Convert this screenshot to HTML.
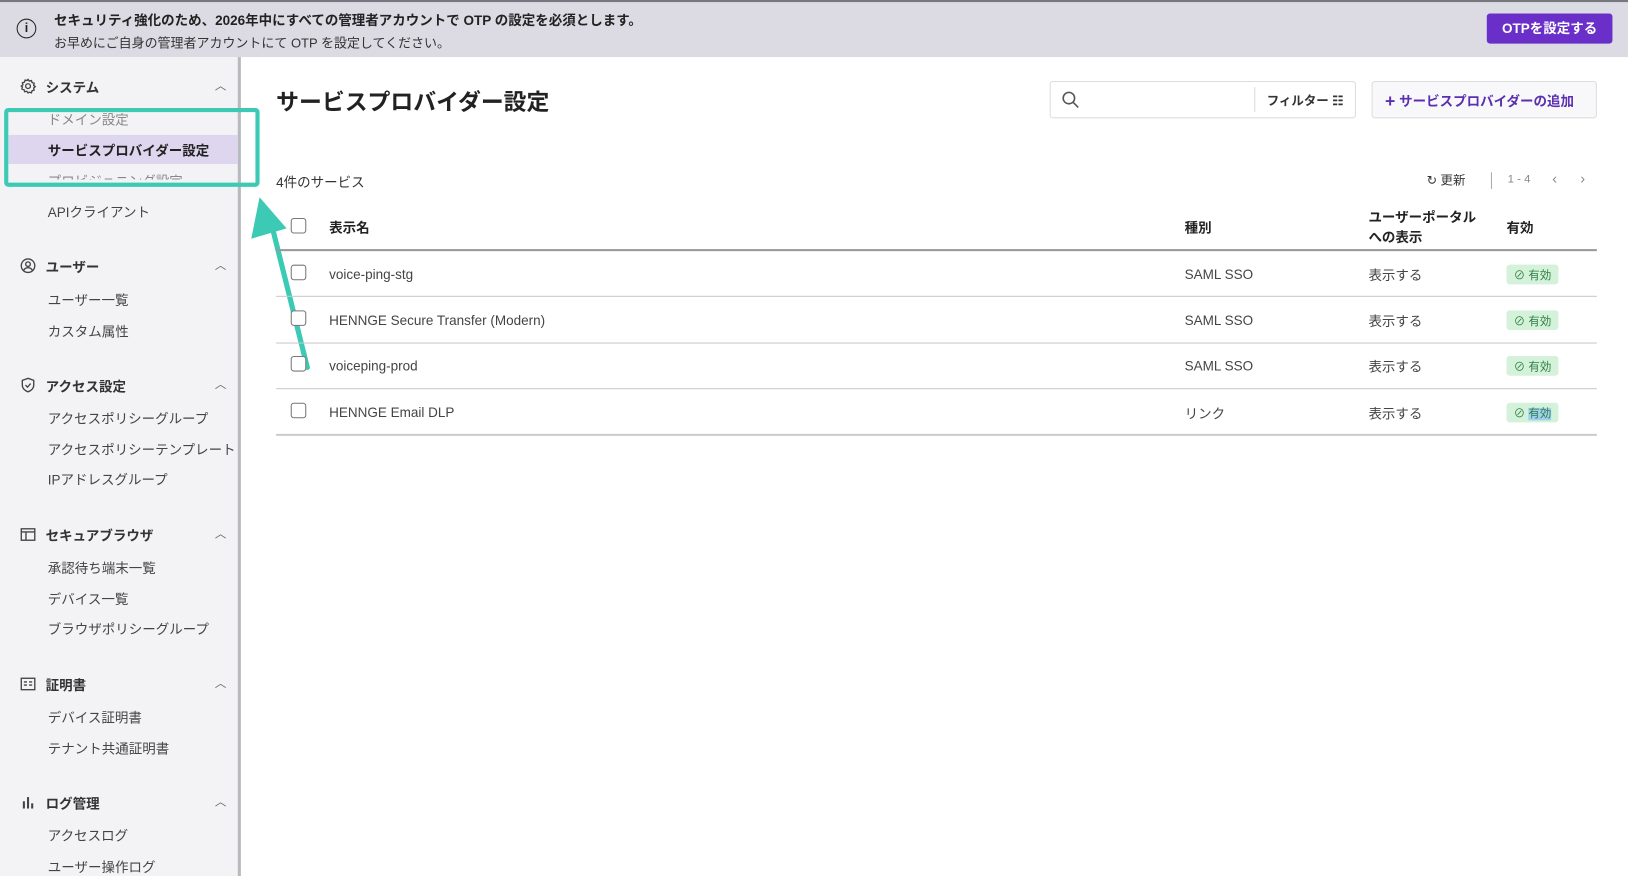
<!DOCTYPE html>
<html><head><meta charset="utf-8"><style>
*{box-sizing:border-box;margin:0;padding:0}
html,body{width:1628px;height:876px;overflow:hidden;background:#fff}
#w{width:1568px;height:844px;transform:scale(1.03827,1.0379);transform-origin:0 0;position:relative;font-family:"Liberation Sans","Noto Sans CJK JP",sans-serif;color:#222}
.a{position:absolute;white-space:nowrap}
.banner{left:0;top:0;width:1568px;height:55px;background:#dcdbe3;border-top:2px solid #77777f}
.side{left:0;top:55px;width:232px;height:789px;background:#f3f3f6;border-right:3px solid #b9b9c0}
.sh{font-size:13px;font-weight:bold;color:#333}
.si{font-size:13px;color:#444;left:46px}
.car{left:207px;font-size:11px;color:#666}
.th{font-size:13px;font-weight:bold;color:#222}
.td{font-size:13px;color:#444}
.cb{width:15px;height:15px;border:1.5px solid #777;border-radius:3px;left:280px;background:#fff}
.line{left:266px;width:1272px;height:1px;background:#c8c8c8}
.badge{left:1451px;width:50px;height:19px;background:#d4f2da;border-radius:3px;font-size:11px;color:#2e7d43;padding:2px 0 0 7px}
</style></head><body><div id="w">
<div class="a banner"></div>
<div class="a" style="left:16px;top:18px;width:19px;height:19px;border:1.6px solid #222;border-radius:50%;font-size:12px;font-weight:bold;text-align:center;line-height:16px">i</div>
<div class="a" style="left:52px;top:9px;font-size:13px;font-weight:bold">セキュリティ強化のため、2026年中にすべての管理者アカウントで OTP の設定を必須とします。</div>
<div class="a" style="left:52px;top:31px;font-size:12.5px;color:#333">お早めにご自身の管理者アカウントにて OTP を設定してください。</div>
<div class="a" style="left:1432px;top:13px;width:121px;height:29px;background:#6a2fc8;border-radius:3px;color:#fff;font-size:13px;font-weight:bold;text-align:center;line-height:29px">OTPを設定する</div>

<div class="a side"></div>
<div class="a" style="left:8px;top:130px;width:221px;height:28px;background:#ddd6ee"></div>
<svg class="a" style="left:19px;top:75px" width="16" height="16" viewBox="0 0 16 16" fill="none" stroke="#444" stroke-width="1.3"><circle cx="8" cy="8" r="2.3"/><path d="M8 1.5l1.3 1.6 2-.5.6 2 2 .6-.5 2 1.6 1.3-1.6 1.3.5 2-2 .6-.6 2-2-.5L8 14.5l-1.3-1.6-2 .5-.6-2-2-.6.5-2L1.5 8l1.6-1.3-.5-2 2-.6.6-2 2 .5z"/></svg>
<div class="a sh" style="left:44px;top:74px">システム</div><div class="a car" style="top:74px">︿</div>
<div class="a si" style="top:105px;color:#888">ドメイン設定</div>
<div class="a si" style="top:135px;font-weight:bold;color:#222">サービスプロバイダー設定</div>
<div class="a si" style="top:164px;color:#888;height:9px;overflow:hidden">プロビジョニング設定</div>
<div class="a si" style="top:194px">APIクライアント</div>
<svg class="a" style="left:19px;top:248px" width="16" height="16" viewBox="0 0 16 16" fill="none" stroke="#444" stroke-width="1.3"><circle cx="8" cy="8" r="6.5"/><circle cx="8" cy="6.5" r="2.2"/><path d="M3.8 12.5c1-2 2.5-2.6 4.2-2.6s3.2.6 4.2 2.6"/></svg>
<div class="a sh" style="left:44px;top:247px">ユーザー</div><div class="a car" style="top:247px">︿</div>
<div class="a si" style="top:279px">ユーザー一覧</div>
<div class="a si" style="top:309px">カスタム属性</div>
<svg class="a" style="left:19px;top:363px" width="16" height="16" viewBox="0 0 16 16" fill="none" stroke="#444" stroke-width="1.3"><path d="M8 1.5l5.5 2v4.5c0 3.2-2.5 5.5-5.5 6.5C5 13.5 2.5 11.2 2.5 8V3.5z"/><path d="M5.5 8l2 2 3-3.5"/></svg>
<div class="a sh" style="left:44px;top:362px">アクセス設定</div><div class="a car" style="top:362px">︿</div>
<div class="a si" style="top:393px">アクセスポリシーグループ</div>
<div class="a si" style="top:423px">アクセスポリシーテンプレート</div>
<div class="a si" style="top:452px">IPアドレスグループ</div>
<svg class="a" style="left:19px;top:507px" width="16" height="16" viewBox="0 0 16 16" fill="none" stroke="#444" stroke-width="1.3"><rect x="1.5" y="2.5" width="13" height="11"/><path d="M1.5 5.5h13M6 5.5v8"/></svg>
<div class="a sh" style="left:44px;top:506px">セキュアブラウザ</div><div class="a car" style="top:506px">︿</div>
<div class="a si" style="top:537px">承認待ち端末一覧</div>
<div class="a si" style="top:567px">デバイス一覧</div>
<div class="a si" style="top:596px">ブラウザポリシーグループ</div>
<svg class="a" style="left:19px;top:651px" width="16" height="16" viewBox="0 0 16 16" fill="none" stroke="#444" stroke-width="1.3"><rect x="1.5" y="2.5" width="13" height="11"/><path d="M4 6h3M4 9h3M9 6h3M9 9h3"/></svg>
<div class="a sh" style="left:44px;top:650px">証明書</div><div class="a car" style="top:650px">︿</div>
<div class="a si" style="top:681px">デバイス証明書</div>
<div class="a si" style="top:711px">テナント共通証明書</div>
<svg class="a" style="left:19px;top:765px" width="16" height="16" viewBox="0 0 16 16" fill="#444"><rect x="3" y="7" width="2" height="7"/><rect x="7" y="3" width="2" height="11"/><rect x="11" y="9" width="2" height="5"/></svg>
<div class="a sh" style="left:44px;top:764px">ログ管理</div><div class="a car" style="top:764px">︿</div>
<div class="a si" style="top:795px">アクセスログ</div>
<div class="a si" style="top:825px">ユーザー操作ログ</div>

<div class="a" style="left:4px;top:104px;width:246px;height:76px;border:4px solid #3ccab5;border-radius:4px"></div>
<svg class="a" style="left:230px;top:180px" width="80" height="185" viewBox="0 0 80 185"><path d="M66 174L30 30" stroke="#3ccab5" stroke-width="5" stroke-linecap="round"/><path d="M20 10L12 50L46 40z" fill="#3ccab5"/></svg>

<div class="a" style="left:266px;top:81px;font-size:22px;font-weight:bold">サービスプロバイダー設定</div>
<div class="a" style="left:1011px;top:78px;width:295px;height:36px;border:1px solid #ddd;border-radius:3px"></div>
<svg class="a" style="left:1022px;top:87px" width="18" height="18" viewBox="0 0 18 18" fill="none" stroke="#555" stroke-width="1.5"><circle cx="7.5" cy="7.5" r="5.5"/><path d="M11.5 11.5l5 5"/></svg>
<div class="a" style="left:1208px;top:84px;width:1px;height:24px;background:#ddd"></div>
<div class="a" style="left:1220px;top:88px;font-size:12px;font-weight:bold;color:#333">フィルター ☷</div>
<div class="a" style="left:1321px;top:78px;width:217px;height:36px;border:1px solid #ddd;border-radius:3px;background:#f8f8fa"></div>
<div class="a" style="left:1334px;top:87px;font-size:13px;font-weight:bold;color:#5a2fb0"><span style="font-size:17px;vertical-align:-1px">+</span> サービスプロバイダーの追加</div>

<div class="a" style="left:266px;top:165px;font-size:13px;color:#333">4件のサービス</div>
<div class="a" style="left:1374px;top:165px;font-size:12px;color:#333">↻ 更新</div>
<div class="a" style="left:1436px;top:166px;width:1px;height:16px;background:#aaa"></div>
<div class="a" style="left:1452px;top:167px;font-size:11px;color:#888">1 - 4</div>
<div class="a" style="left:1495px;top:164px;font-size:14px;color:#888">‹</div>
<div class="a" style="left:1522px;top:164px;font-size:14px;color:#888">›</div>

<div class="a cb" style="top:210px"></div>
<div class="a th" style="left:317px;top:209px">表示名</div>
<div class="a th" style="left:1141px;top:209px">種別</div>
<div class="a th" style="left:1318px;top:200px;line-height:19px">ユーザーポータル<br>への表示</div>
<div class="a th" style="left:1451px;top:209px">有効</div>
<div class="a line" style="top:240px;height:2px;background:#999"></div>

<div class="a cb" style="top:255px"></div><div class="a td" style="left:317px;top:257px">voice-ping-stg</div><div class="a td" style="left:1141px;top:257px">SAML SSO</div><div class="a td" style="left:1318px;top:255px">表示する</div><div class="a badge" style="top:255px">⊘ 有効</div>
<div class="a line" style="top:285px"></div>
<div class="a cb" style="top:299px"></div><div class="a td" style="left:317px;top:301px">HENNGE Secure Transfer (Modern)</div><div class="a td" style="left:1141px;top:301px">SAML SSO</div><div class="a td" style="left:1318px;top:299px">表示する</div><div class="a badge" style="top:299px">⊘ 有効</div>
<div class="a line" style="top:330px"></div>
<div class="a cb" style="top:343px"></div><div class="a td" style="left:317px;top:345px">voiceping-prod</div><div class="a td" style="left:1141px;top:345px">SAML SSO</div><div class="a td" style="left:1318px;top:343px">表示する</div><div class="a badge" style="top:343px">⊘ 有効</div>
<div class="a line" style="top:374px"></div>
<div class="a cb" style="top:388px"></div><div class="a td" style="left:317px;top:390px">HENNGE Email DLP</div><div class="a td" style="left:1141px;top:388px">リンク</div><div class="a td" style="left:1318px;top:388px">表示する</div><div class="a badge" style="top:388px">⊘ <span style="background:#9fd0ef">有効</span></div>
<div class="a line" style="top:418px;height:2px;background:#ccc"></div>
</div></body></html>
